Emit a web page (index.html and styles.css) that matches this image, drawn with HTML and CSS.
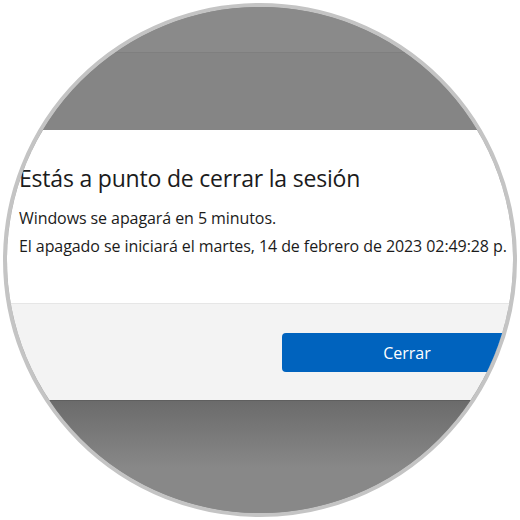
FILE: index.html
```html
<!DOCTYPE html>
<html lang="es">
<head>
    <meta charset="UTF-8">
    <title>Cerrar sesión</title>
    <link rel="stylesheet" href="styles.css">
</head>
<body>

<div class="lens">
    <div class="taskbar"></div>
    <div class="backdrop"></div>
    <div class="dialog">
        <div class="dialog-body">
            <h1 class="title">Estás a punto de cerrar la sesión</h1>
            <p class="line">Windows se apagará en 5 minutos.</p>
            <p class="line">El apagado se iniciará el martes, 14 de febrero de 2023 02:49:28 p.</p>
        </div>
        <div class="dialog-footer">
            <button class="primary">Cerrar</button>
        </div>
    </div>
    <div class="backdrop-bottom"></div>
</div>

</body>
</html>
```

FILE: styles.css
```css
body { margin: 0; background: #fff; font-family: "Open Sans", "Noto Sans", sans-serif; }
.lens { width: 506px; height: 506px; margin: 3px auto 0; border: 4px solid #c4c4c4; border-radius: 50%; overflow: hidden; display: flex; flex-direction: column; background: #868686; }
.taskbar { height: 45px; background: #8a8a8a; border-bottom: 1px solid #7f7f7f; flex-shrink: 0; }
.backdrop { height: 77px; background: #858585; flex-shrink: 0; }
.dialog { margin: 0 -30px; flex-shrink: 0; }
.dialog-body { height: 173px; background: #fff; padding: 32px 0 0 42px; box-sizing: border-box; color: #1b1b1b; }
.title { margin: 0; font-size: 23px; font-weight: 400; line-height: 32px; letter-spacing: -0.2px; }
.line { margin: 0; font-size: 16px; line-height: 28px; letter-spacing: -0.08px; }
.title + .line { margin-top: 10px; }
.dialog-footer { height: 98px; background: #f3f3f3; border-top: 1px solid #e6e6e6; box-sizing: border-box; display: flex; justify-content: flex-end; align-items: flex-start; padding: 29px 11px 0 0; border-bottom: 1px solid #5f5f5f; }
.primary { width: 250px; height: 39px; background: #0063be; color: #fff; border: none; border-radius: 4px; font-family: inherit; font-size: 16px; }
.backdrop-bottom { flex: 1; background: linear-gradient(#6b6b6b, #888 60%); }
```
